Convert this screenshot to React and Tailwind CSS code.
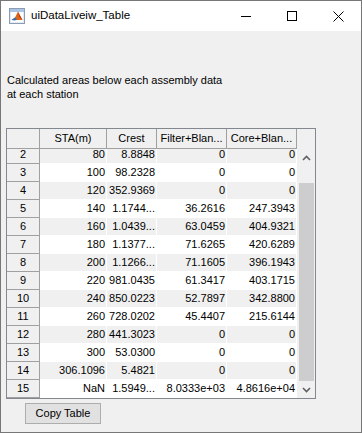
const rows = [
  ["2", "80", "8.8848", "0", "0"],
  ["3", "100", "98.2328", "0", "0"],
  ["4", "120", "352.9369", "0", "0"],
  ["5", "140", "1.1744...", "36.2616", "247.3943"],
  ["6", "160", "1.0439...", "63.0459", "404.9321"],
  ["7", "180", "1.1377...", "71.6265", "420.6289"],
  ["8", "200", "1.1266...", "71.1605", "396.1943"],
  ["9", "220", "981.0435", "61.3417", "403.1715"],
  ["10", "240", "850.0223", "52.7897", "342.8800"],
  ["11", "260", "728.0202", "45.4407", "215.6144"],
  ["12", "280", "441.3023", "0", "0"],
  ["13", "300", "53.0300", "0", "0"],
  ["14", "306.1096", "5.4821", "0", "0"],
  ["15", "NaN", "1.5949...", "8.0333e+03", "4.8616e+04"],
];

const colWidths = ["w-[67px]", "w-[50px]", "w-[70px]", "w-[70px]"];
const headers = ["STA(m)", "Crest", "Filter+Blan...", "Core+Blan..."];

function MatlabIcon() {
  return (
    <svg width="16" height="16" viewBox="0 0 16 16">
      <rect x="0.5" y="0.5" width="15" height="15" fill="#e3eaf3" stroke="#8a9db5" />
      <rect x="1" y="1" width="14" height="3" fill="#a9c4e4" />
      <rect x="2" y="4" width="12" height="10" fill="#ffffff" />
      <path d="M2.5 12 L6 9.5 L9 3.5 L11 7.5 L13.5 12 Z" fill="#e0661c" />
      <path d="M2.5 12 L6 9.5 L8 11.5 L6 12.5 Z" fill="#2f6fb5" />
      <path d="M9 3.5 L10 9 L13.5 12 L11 7.5 Z" fill="#b8441a" />
    </svg>
  );
}

function TitleBar() {
  return (
    <div className="h-[30px] bg-white flex items-center shrink-0">
      <div className="ml-[8px] mt-[-1px]">
        <MatlabIcon />
      </div>
      <span className="ml-[6px] text-[11.5px] text-black">uiDataLiveiw_Table</span>
      <div className="ml-auto flex h-full">
        <div className="w-[46px] flex items-center justify-center">
          <svg width="10" height="10" viewBox="0 0 10 10">
            <line x1="0" y1="5.5" x2="10" y2="5.5" stroke="#000" strokeWidth="1" />
          </svg>
        </div>
        <div className="w-[46px] flex items-center justify-center">
          <svg width="10" height="10" viewBox="0 0 10 10">
            <rect x="0.5" y="0.5" width="9" height="9" fill="none" stroke="#000" strokeWidth="1" />
          </svg>
        </div>
        <div className="w-[46px] flex items-center justify-center">
          <svg width="11" height="11" viewBox="0 0 11 11">
            <path d="M0.5 0.5 L10.5 10.5 M10.5 0.5 L0.5 10.5" stroke="#000" strokeWidth="1" />
          </svg>
        </div>
      </div>
    </div>
  );
}

function Chevron({ up }) {
  return (
    <svg width="9" height="6" viewBox="0 0 9 6">
      <path
        d={up ? "M1 5 L4.5 1.5 L8 5" : "M1 1 L4.5 4.5 L8 1"}
        fill="none"
        stroke="#606060"
        strokeWidth="1.6"
      />
    </svg>
  );
}

function DataTable() {
  return (
    <div className="ml-[5px] w-[310px] h-[271px] border border-[#828790] flex bg-[#f0f0f0] text-[11px] text-black">
      <div className="w-[290px] flex flex-col">
        {/* header */}
        <div className="h-[20px] flex border-b border-[#a0a0a0] shrink-0">
          <div className="w-[33px] border-r border-[#a0a0a0]" />
          {headers.map((h, i) => (
            <div
              key={h}
              className={`${colWidths[i]} border-r border-[#a0a0a0] flex items-center justify-center whitespace-nowrap overflow-hidden`}
            >
              {h}
            </div>
          ))}
        </div>
        {/* body, scrolled to bottom */}
        <div className="h-[249px] overflow-hidden">
          <div className="mt-[-3px]">
            {rows.map((r, idx) => (
              <div key={r[0]} className={`h-[18px] flex ${idx % 2 === 0 ? "bg-[#f0f0f0]" : "bg-white"}`}>
                <div className="w-[33px] bg-[#f0f0f0] border-r border-b border-[#a0a0a0] flex items-center justify-center">
                  {r[0]}
                </div>
                {r.slice(1).map((v, i) => (
                  <div
                    key={i}
                    className={`${colWidths[i]} border-r border-b border-white flex items-center justify-end pr-[1px] whitespace-nowrap overflow-hidden`}
                  >
                    {v}
                  </div>
                ))}
              </div>
            ))}
          </div>
        </div>
      </div>
      {/* scrollbar */}
      <div className="w-[18px] flex flex-col">
        <div className="h-[20px]" />
        <div className="h-[17px] flex items-center justify-center">
          <Chevron up />
        </div>
        <div className="h-[17px]" />
        <div className="h-[198px] ml-[2px] w-[15px] bg-[#cdcdcd]" />
        <div className="h-[17px] flex items-center justify-center">
          <Chevron />
        </div>
      </div>
    </div>
  );
}

export default function App() {
  return (
    <div
      className="w-[362px] h-[433px] border border-[#777777] bg-[#f0f0f0] flex flex-col"
      style={{ fontFamily: '"Liberation Sans", Arial, sans-serif' }}
    >
      <TitleBar />
      <div className="flex flex-col">
        <div className="mt-[42px] ml-[6px] text-[11px] leading-[14px] text-black">
          <div>Calculated areas below each assembly data</div>
          <div>at each station</div>
        </div>
        <div className="mt-[27px]">
          <DataTable />
        </div>
        <button
          type="button"
          className="mt-[4px] ml-[24px] w-[76px] h-[21px] bg-[#e1e1e1] border border-[#adadad] text-[11px] text-black flex items-center justify-center"
        >
          Copy Table
        </button>
      </div>
    </div>
  );
}
